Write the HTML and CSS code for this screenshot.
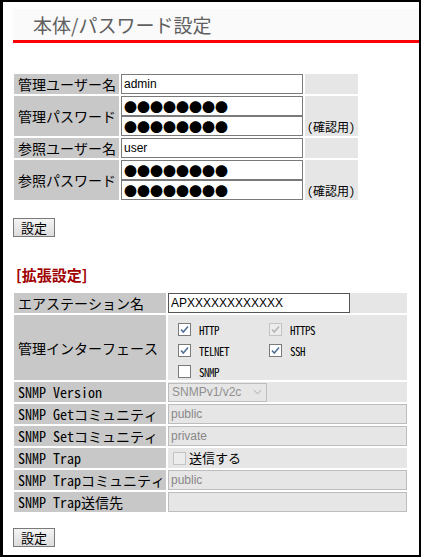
FILE: index.html
```html
<!DOCTYPE html>
<html lang="ja">
<head>
    <meta charset="UTF-8">
    <title>本体/パスワード設定</title>
    <link rel="stylesheet" href="styles.css">
</head>
<body>
    <div class="frame">
        <h1 class="title">本体/パスワード設定</h1>

        <table class="grid basic">
            <tr>
                <th>管理ユーザー名</th>
                <td class="field"><input type="text" class="txt" value="admin"></td>
                <td class="note"></td>
            </tr>
            <tr class="tall">
                <th>管理パスワード</th>
                <td class="field">
                    <input type="text" class="txt pw" value="●●●●●●●●">
                    <input type="text" class="txt pw" value="●●●●●●●●">
                </td>
                <td class="note">(確認用)</td>
            </tr>
            <tr>
                <th>参照ユーザー名</th>
                <td class="field"><input type="text" class="txt" value="user"></td>
                <td class="note"></td>
            </tr>
            <tr class="tall">
                <th>参照パスワード</th>
                <td class="field">
                    <input type="text" class="txt pw" value="●●●●●●●●">
                    <input type="text" class="txt pw" value="●●●●●●●●">
                </td>
                <td class="note">(確認用)</td>
            </tr>
        </table>

        <button class="btn">設定</button>

        <h2 class="section">[拡張設定]</h2>

        <table class="grid ext">
            <tr>
                <th>エアステーション名</th>
                <td><input type="text" class="txt name" value="APXXXXXXXXXXXX"></td>
            </tr>
            <tr class="ifaces">
                <th>管理インターフェース</th>
                <td>
                    <div class="checks">
                        <label class="chk"><span class="box"><svg viewBox="0 0 11 11"><path d="M2 5.5 L4.3 8 L9 2.5"/></svg></span>HTTP</label>
                        <label class="chk"><span class="box off"><svg viewBox="0 0 11 11"><path d="M2 5.5 L4.3 8 L9 2.5"/></svg></span>HTTPS</label>
                        <label class="chk"><span class="box"><svg viewBox="0 0 11 11"><path d="M2 5.5 L4.3 8 L9 2.5"/></svg></span>TELNET</label>
                        <label class="chk"><span class="box"><svg viewBox="0 0 11 11"><path d="M2 5.5 L4.3 8 L9 2.5"/></svg></span>SSH</label>
                        <label class="chk"><span class="box"></span>SNMP</label>
                    </div>
                </td>
            </tr>
            <tr>
                <th>SNMP Version</th>
                <td>
                    <div class="select">
                        <span>SNMPv1/v2c</span>
                        <svg viewBox="0 0 10 6"><path d="M1 1 L5 5 L9 1"/></svg>
                    </div>
                </td>
            </tr>
            <tr>
                <th>SNMP Getコミュニティ</th>
                <td><input type="text" class="txt dis" value="public" disabled></td>
            </tr>
            <tr>
                <th>SNMP Setコミュニティ</th>
                <td><input type="text" class="txt dis" value="private" disabled></td>
            </tr>
            <tr>
                <th>SNMP Trap</th>
                <td><label class="send"><span class="box off"></span>送信する</label></td>
            </tr>
            <tr>
                <th>SNMP Trapコミュニティ</th>
                <td><input type="text" class="txt dis" value="public" disabled></td>
            </tr>
            <tr>
                <th>SNMP Trap送信先</th>
                <td><input type="text" class="txt dis" value="" disabled></td>
            </tr>
        </table>

        <button class="btn">設定</button>
    </div>
</body>
</html>
```

FILE: styles.css
```css
html, body {
    margin: 0;
    padding: 0;
    background: #fff;
}
body {
    font-family: "Noto Sans Mono CJK JP", "Noto Sans CJK JP", "Noto Sans", sans-serif;
    font-size: 14px;
    color: #000;
}
.frame {
    box-sizing: border-box;
    width: 421px;
    height: 557px;
    border: 2px solid #000;
    border-left-width: 3px;
    overflow: hidden;
}
.title {
    margin: 7px 0 0 10px;
    height: 31px;
    line-height: 31px;
    padding-left: 20px;
    background: #fafafa;
    border-bottom: 3px solid #f00;
    font-family: "Noto Sans CJK JP", sans-serif;
    font-size: 19px;
    font-weight: normal;
    color: #606060;
}
.grid {
    border-collapse: separate;
    border-spacing: 2px;
    margin-left: 9px;
}
.grid th {
    background: #c8c8c8;
    font-weight: normal;
    text-align: left;
    padding: 0 0 0 4px;
    height: 20px;
    line-height: 18px;
    white-space: nowrap;
}
.grid td {
    background: #e6e6e6;
    padding: 0;
    height: 20px;
    line-height: 18px;
}
.basic {
    margin-top: 29px;
}
.basic th {
    width: 101px;
}
.basic .field {
    width: 182px;
}
.basic .note {
    width: 51px;
    padding-left: 2px;
    vertical-align: bottom;
    font-size: 12px;
    line-height: 18px;
}
.basic .tall th {
    height: 40px;
}
.txt {
    display: block;
    box-sizing: border-box;
    width: 100%;
    height: 20px;
    margin: 0;
    padding: 0 2px;
    border: 1px solid #7a7a7a;
    background: #fff;
    font-family: "Liberation Sans", sans-serif;
    font-size: 12px;
    color: #000;
    outline: none;
}
.pw {
    font-family: "Noto Sans CJK JP", sans-serif;
    font-size: 13px;
}
.btn {
    display: block;
    margin: 16px 0 0 10px;
    width: 42px;
    height: 19px;
    padding: 0;
    border: 1px solid #7a7a7a;
    background: linear-gradient(#f4f4f4, #dcdcdc);
    font-family: "Noto Sans CJK JP", sans-serif;
    font-size: 13px;
    line-height: 16px;
    color: #000;
}
.ext + .btn {
    margin-top: 14px;
}
.section {
    margin: 30px 0 0 13px;
    font-family: "Noto Sans CJK JP", sans-serif;
    font-size: 15px;
    line-height: 16px;
    font-weight: bold;
    color: #a00000;
}
.ext {
    margin-top: 8px;
}
.ext th {
    width: 148px;
}
.ext td {
    width: 239px;
}
.ext .name {
    width: 182px;
    border-color: #555;
}
.ext .dis {
    background: #e6e6e6;
    border-color: #bdbdbd;
    color: #888;
}
.ext .ifaces th {
    height: 65px;
}
.checks {
    display: grid;
    grid-template-columns: 91px 91px;
    grid-auto-rows: 13px;
    row-gap: 8px;
    padding: 8px 0 2px 10px;
}
.chk, .send {
    display: flex;
    align-items: center;
}
.chk {
    height: 13px;
    font-size: 11px;
    letter-spacing: -0.5px;
}
.box {
    box-sizing: border-box;
    width: 13px;
    height: 13px;
    margin-right: 8px;
    border: 1px solid #7a7a7a;
    background: #fff;
    display: flex;
    align-items: center;
    justify-content: center;
}
.box svg {
    width: 11px;
    height: 11px;
    fill: none;
    stroke: #4d6f96;
    stroke-width: 1.5;
}
.box.off {
    border-color: #c4c4c4;
    background: #ececec;
}
.box.off svg {
    stroke: #b4b4b4;
}
.send {
    height: 20px;
    padding-left: 5px;
    font-family: "Noto Sans CJK JP", sans-serif;
    font-size: 13px;
}
.send .box {
    margin-right: 3px;
}
.select {
    box-sizing: border-box;
    display: flex;
    align-items: center;
    justify-content: space-between;
    width: 99px;
    height: 19px;
    padding: 0 4px 0 3px;
    border: 1px solid #bdbdbd;
    background: #e6e6e6;
    font-family: "Liberation Sans", sans-serif;
    font-size: 12px;
    color: #909090;
}
.select svg {
    width: 9px;
    height: 6px;
    fill: none;
    stroke: #a0a0a0;
    stroke-width: 1;
}
```
